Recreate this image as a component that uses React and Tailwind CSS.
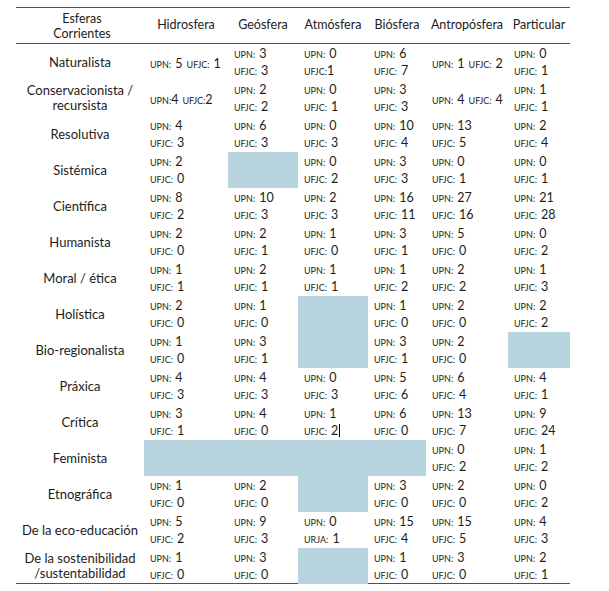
import React from 'react';

const COLS = ['Hidrosfera', 'Geósfera', 'Atmósfera', 'Biósfera', 'Antropósfera', 'Particular'];

// each cell: [upn, ufjc] | { one: [[lbl, num], ...] } | null (shaded)
const ROWS = [
    { label: ['Naturalista'], cells: [{ one: [['UPN:', '5'], ['UFJC:', '1']] }, ['3', '3'], { two: [['UPN:', ' 0'], ['UFJC:', '1']] }, ['6', '7'], { one: [['UPN:', '1'], ['UFJC:', '2']] }, ['0', '1']] },
    { label: ['Conservacionista /', 'recursista'], cells: [{ one: [['UPN:', '4', true], ['UFJC:', '2', true]] }, ['2', '2'], ['0', '1'], ['3', '3'], { one: [['UPN:', '4'], ['UFJC:', '4']] }, ['1', '1']] },
    { label: ['Resolutiva'], cells: [['4', '3'], ['6', '3'], ['0', '3'], ['10', '4'], ['13', '5'], ['2', '4']] },
    { label: ['Sistémica'], cells: [['2', '0'], null, ['0', '2'], ['3', '3'], ['0', '1'], ['0', '1']] },
    { label: ['Científica'], cells: [['8', '2'], ['10', '3'], ['2', '3'], ['16', '11'], ['27', '16'], ['21', '28']] },
    { label: ['Humanista'], cells: [['2', '0'], ['2', '1'], ['1', '0'], ['3', '1'], ['5', '0'], ['0', '2']] },
    { label: ['Moral / ética'], cells: [['1', '1'], ['2', '1'], ['1', '1'], ['1', '2'], ['2', '2'], ['1', '3']] },
    { label: ['Holística'], cells: [['2', '0'], ['1', '0'], null, ['1', '0'], ['2', '0'], ['2', '2']] },
    { label: ['Bio-regionalista'], cells: [['1', '0'], ['3', '1'], null, ['3', '1'], ['2', '0'], null] },
    { label: ['Práxica'], cells: [['4', '3'], ['4', '3'], ['0', '3'], ['5', '6'], ['6', '4'], ['4', '1']] },
    { label: ['Crítica'], cells: [['3', '1'], ['4', '0'], { two: [['UPN:', '1'], ['UFJC:', '2']], cursor: true }, ['6', '0'], ['13', '7'], ['9', '24']] },
    { label: ['Feminista'], cells: [null, null, null, null, ['0', '2'], ['1', '2']] },
    { label: ['Etnográfica'], cells: [['1', '0'], ['2', '0'], null, ['3', '0'], ['2', '0'], ['0', '2']] },
    { label: ['De la eco-educación'], cells: [['5', '2'], ['9', '3'], { two: [['UPN:', '0'], ['URJA:', '1']] }, ['15', '4'], ['15', '5'], ['4', '3']] },
    { label: ['De la sostenibilidad', '/sustentabilidad'], cells: [['1', '0'], ['3', '0'], null, ['1', '0'], ['3', '0'], ['2', '1']] },
];

function Pair({ lbl, num, tight }) {
    return (
        <span className="whitespace-nowrap">
            <span className="text-[9px]">{lbl}</span>
            {tight ? '' : ' '}
            <span className="text-[12.5px]">{num.trim()}</span>
        </span>
    );
}

function Cell({ cell, last }) {
    if (cell === null) {
        return <div className="bg-[#b8d5df] h-[36px]" />;
    }
    const edge = last ? 'border-b-[1.5px] border-[#1f6272]' : '';
    if (cell.one) {
        return (
            <div className={`h-[36px] flex items-center pl-[6px] gap-[4px] ${edge}`}>
                {cell.one.map(([l, n, t], i) => <Pair key={i} lbl={l} num={n} tight={t} />)}
            </div>
        );
    }
    const lines = cell.two || [['UPN:', cell[0]], ['UFJC:', cell[1]]];
    return (
        <div className={`h-[36px] flex flex-col justify-center pl-[6px] leading-[14px] ${edge}`}>
            <div><Pair lbl={lines[0][0]} num={lines[0][1]} /></div>
            <div className="flex items-center">
                <Pair lbl={lines[1][0]} num={lines[1][1]} tight={lines[1][1] === '1' && cell.two && lines[1][0] === 'UFJC:' && !cell.cursor} />
                {cell.cursor && <span className="inline-block w-px h-[13px] bg-black ml-px" />}
            </div>
        </div>
    );
}

export default function App() {
    return (
        <div className="w-[609px] h-[591px] bg-white text-[#1c1c1c] pt-[7px] pl-[16px]" style={{ fontFamily: 'Lato, "Open Sans", sans-serif' }}>
            <div className="w-[554px] grid grid-cols-[128px_84px_70px_70px_58px_82px_62px] border-t-[1.5px] border-[#1f6272]">
                <div className="h-[36px] flex flex-col items-center justify-center text-[12.5px] leading-[15px] pl-[4px] border-b-[1.5px] border-[#1f6272]">
                    <span>Esferas</span>
                    <span>Corrientes</span>
                </div>
                {COLS.map(c => (
                    <div key={c} className="h-[36px] flex items-center justify-center text-[12.5px] border-b-[1.5px] border-[#1f6272]">{c}</div>
                ))}
                {ROWS.map((r, ri) => {
                    const last = ri === ROWS.length - 1;
                    return (
                        <React.Fragment key={ri}>
                            <div className={`h-[36px] flex flex-col items-center justify-center text-[13px] leading-[15px] text-center ${last ? 'border-b-[1.5px] border-[#1f6272]' : ''}`}>
                                {r.label.map((l, i) => <span key={i} className="whitespace-nowrap">{l}</span>)}
                            </div>
                            {r.cells.map((c, ci) => <Cell key={ci} cell={c} last={last} />)}
                        </React.Fragment>
                    );
                })}
            </div>
        </div>
    );
}
